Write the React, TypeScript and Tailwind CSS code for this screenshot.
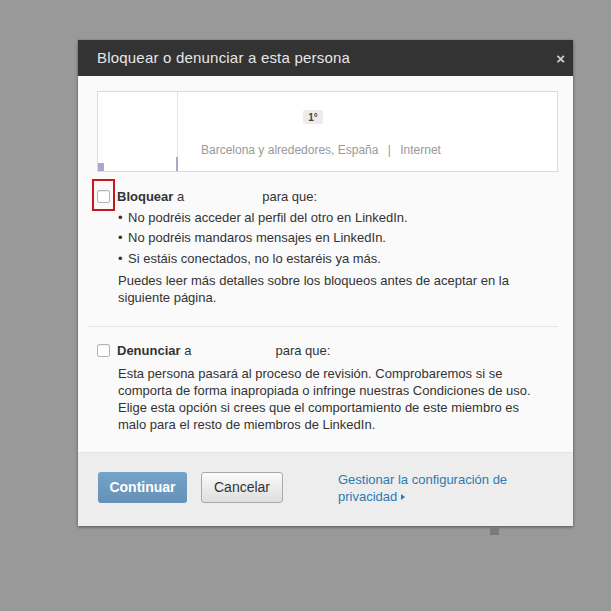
import { useState } from "react";

function Box({ checked, onChange }: { checked: boolean; onChange: () => void }) {
  return (
    <button
      onClick={onChange}
      className="w-[13px] h-[13px] shrink-0 rounded-[2px] border border-[#b5b5b5] bg-white shadow-[inset_0_1px_1px_rgba(0,0,0,0.08)] flex items-center justify-center"
    >
      {checked && <span className="block w-[7px] h-[7px] bg-[#4a7aa5]" />}
    </button>
  );
}

export default function App() {
  const [block, setBlock] = useState(false);
  const [report, setReport] = useState(false);

  return (
    <div className="relative w-[611px] h-[611px] bg-[#999999] overflow-hidden font-['Liberation_Sans',Arial,sans-serif]">
      {/* dialog */}
      <div className="absolute left-[78px] top-[40px] w-[495px] bg-[#fafafa] shadow-[0_1px_3px_rgba(0,0,0,0.45)]">
        <div className="h-[36px] bg-[#333333] flex items-center justify-between pl-[19px] pr-[8px]">
          <span className="text-[15px] text-[#e6e6e6] tracking-[0.2px]">Bloquear o denunciar a esta persona</span>
          <span className="text-[15px] font-bold text-[#cfcfcf] leading-none">×</span>
        </div>

        <div className="pl-[19px] pr-[15px] pt-[15px]">
          {/* profile card */}
          <div className="h-[81px] border border-[#dcdcdc] bg-white flex">
            <div className="relative w-[80px] h-full border-r border-[#e4e4ee]">
              <div className="absolute left-0 bottom-0 w-[6px] h-[8px] bg-[#a9a6cf]" />
              <div className="absolute right-[-1px] bottom-0 w-[2px] h-[14px] bg-[#a9a6cf]" />
            </div>
            <div className="flex flex-col pl-[23px] pt-[18px]">
              <span className="ml-[102px] w-[20px] h-[14px] bg-[#ececec] rounded-[2px] text-[10px] font-bold text-[#444] flex items-center justify-center">
                1°
              </span>
              <div className="mt-[17px] text-[12px] text-[#999999] whitespace-nowrap">
                Barcelona y alrededores, España <span className="mx-[6px]">|</span> Internet
              </div>
            </div>
          </div>

          {/* block */}
          <div className="relative pt-[15px] pb-[20px] border-b border-[#e6e6e6] -ml-[9px] pl-[9px]">
            <div className="absolute left-[4px] top-[7px] w-[23px] h-[32px] border-2 border-[#c8161d]" />
            <div className="flex items-center gap-[7px] text-[13px] text-[#333]">
              <Box checked={block} onChange={() => setBlock(!block)} />
              <span>
                <b>Bloquear</b> a<span className="inline-block w-[78px]" />para que:
              </span>
            </div>
            <ul className="ml-[21px] mt-[1px] text-[13px] text-[#333] leading-[20.5px]">
              <li className="flex"><span className="w-[10px]">•</span>No podréis acceder al perfil del otro en LinkedIn.</li>
              <li className="flex"><span className="w-[10px]">•</span>No podréis mandaros mensajes en LinkedIn.</li>
              <li className="flex"><span className="w-[10px]">•</span>Si estáis conectados, no lo estaréis ya más.</li>
            </ul>
            <p className="ml-[21px] mt-[3px] w-[420px] text-[13px] text-[#333] leading-[17px]">
              Puedes leer más detalles sobre los bloqueos antes de aceptar en la siguiente página.
            </p>
          </div>

          {/* report */}
          <div className="pt-[14px] pb-[19px]">
            <div className="flex items-center gap-[7px] text-[13px] text-[#333]">
              <Box checked={report} onChange={() => setReport(!report)} />
              <span>
                <b>Denunciar</b> a<span className="inline-block w-[84px]" />para que:
              </span>
            </div>
            <p className="ml-[21px] mt-[4px] w-[430px] text-[13px] text-[#333] leading-[17px]">
              Esta persona pasará al proceso de revisión. Comprobaremos si se comporta de forma inapropiada o infringe nuestras Condiciones de uso. Elige esta opción si crees que el comportamiento de este miembro es malo para el resto de miembros de LinkedIn.
            </p>
          </div>
        </div>

        {/* footer */}
        <div className="h-[74px] bg-[#ededed] border-t border-[#e4e4e4] flex items-start pt-[19px] pl-[20px]">
          <button className="w-[89px] h-[31px] rounded-[3px] bg-gradient-to-b from-[#76a3ca] to-[#6590b7] text-white text-[14px] font-bold">
            Continuar
          </button>
          <button className="ml-[14px] w-[82px] h-[31px] rounded-[3px] border border-[#a9a9a9] bg-gradient-to-b from-[#fafafa] to-[#dedede] text-[#333] text-[14px]">
            Cancelar
          </button>
          <a className="ml-[55px] -mt-[1px] w-[190px] text-[13px] leading-[17px] text-[#2c7ab0]">
            Gestionar la configuración de privacidad
            <span className="inline-block ml-[4px] w-0 h-0 border-y-[3px] border-y-transparent border-l-[4px] border-l-[#2c7ab0] align-middle" />
          </a>
        </div>
      </div>

      <div className="absolute left-[490px] top-[527px] w-[9px] h-[8px] bg-[#7a7a7a]" />
    </div>
  );
}
